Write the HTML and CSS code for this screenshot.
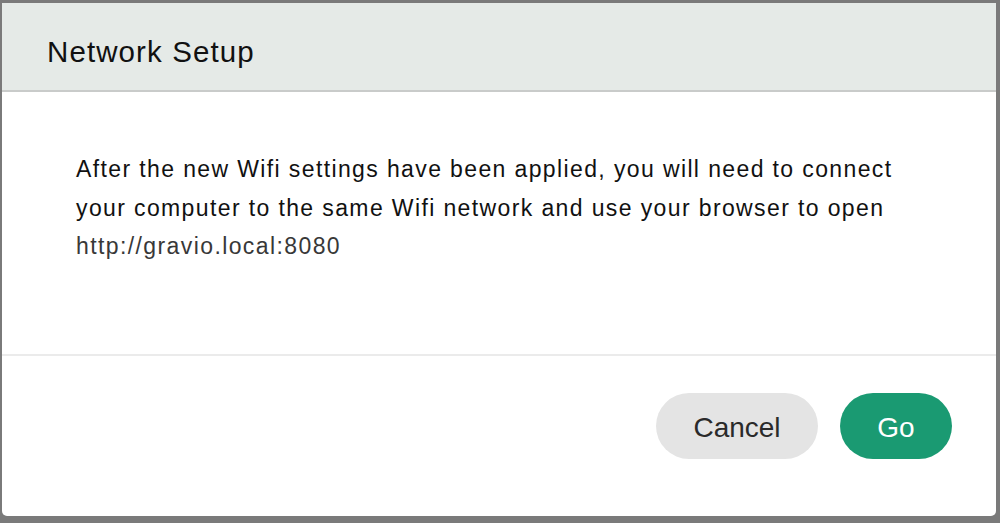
FILE: index.html
```html
<!DOCTYPE html>
<html lang="en">
<head>
<meta charset="utf-8">
<title>Network Setup</title>
<link rel="stylesheet" href="styles.css">
</head>
<body>
<div class="modal">
  <div class="modal-header">
    <h1 class="modal-title">Network Setup</h1>
  </div>
  <div class="modal-body">
    <p class="message">After the new Wifi settings have been applied, you will need to connect your computer to the same Wifi network and use your browser to open</p>
    <p class="url">http://gravio.local:8080</p>
  </div>
  <div class="modal-footer">
    <button class="btn btn-cancel">Cancel</button>
    <button class="btn btn-go">Go</button>
  </div>
</div>
</body>
</html>
```
FILE: styles.css
```css
html, body {
  margin: 0;
  padding: 0;
  height: 100%;
  background: #7a7a7a;
  overflow: hidden;
}
body {
  padding: 3px 4px 0 2px;
  box-sizing: border-box;
  font-family: "Liberation Sans", Arial, sans-serif;
}
.modal {
  width: 994px;
  height: 513px;
  background: #ffffff;
  border-radius: 0 0 5px 5px;
  display: flex;
  flex-direction: column;
  overflow: hidden;
}
.modal-header {
  flex: none;
  height: 89px;
  box-sizing: border-box;
  background: #e5eae7;
  border-bottom: 2px solid #c9cbca;
  display: flex;
  align-items: center;
  padding: 10px 0 0 45px;
}
.modal-title {
  margin: 0;
  font-size: 29.5px;
  letter-spacing: 1.1px;
  font-weight: normal;
  color: #111111;
}
.modal-body {
  flex: none;
  height: 264px;
  border-bottom: 2px solid #ebebeb;
  padding: 58px 0 0 74px;
  box-sizing: border-box;
}
.message {
  margin: 0;
  width: 840px;
  font-size: 23px;
  letter-spacing: 1.38px;
  line-height: 38.5px;
  color: #111111;
}
.url {
  margin: 0;
  font-size: 23px;
  letter-spacing: 1.4px;
  line-height: 38.5px;
  color: #383838;
}
.modal-footer {
  flex: 1;
  display: flex;
  justify-content: flex-end;
  align-items: flex-start;
  gap: 22px;
  padding: 37px 44px 0 0;
}
.btn {
  height: 66px;
  border: none;
  border-radius: 33px;
  font-family: "Liberation Sans", Arial, sans-serif;
  font-size: 28px;
  padding: 3px 0 0;
  cursor: pointer;
}
.btn-cancel {
  width: 162px;
  background: #e4e4e4;
  color: #2a2a2a;
}
.btn-go {
  width: 112px;
  background: #1a9a72;
  color: #ffffff;
}
```
